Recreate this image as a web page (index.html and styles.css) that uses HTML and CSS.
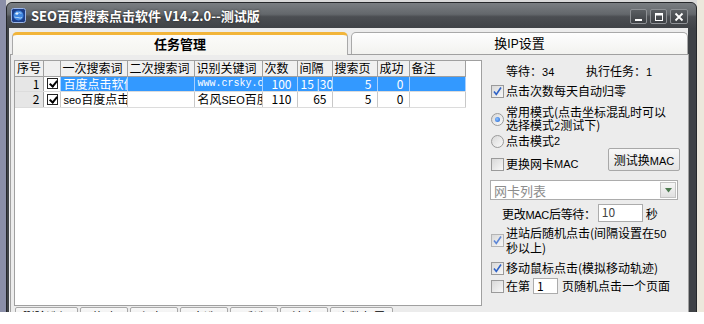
FILE: index.html
```html
<!DOCTYPE html>
<html lang="zh-CN">
<head>
    <meta charset="UTF-8">
    <title>SEO百度搜索点击软件 V14.2.0--测试版</title>
    <link rel="stylesheet" href="styles.css">
</head>
<body>
<div class="screen">
    <div class="window">

        <!-- Title bar -->
        <div class="titlebar">
            <svg class="app-icon" width="15" height="15" viewBox="0 0 15 15">
                <rect x="0.5" y="0.5" width="14" height="14" rx="2" fill="#1d3f8a" stroke="#9bb6e8"/>
                <circle cx="7.5" cy="7.5" r="5" fill="#3f86e0"/>
                <path d="M4 6c1.5-1 2.5 0 3.5-1s2 .5 3 .2M3.5 9c1.5.8 3 .2 4.5.8s2 .2 3-.5" stroke="#bfe0ff" stroke-width="1" fill="none"/>
                <circle cx="6" cy="5.5" r="1.2" fill="#e6f3ff"/>
            </svg>
            <span class="title">SEO百度搜索点击软件 V14.2.0--测试版</span>
            <div class="caption-btns">
                <span class="cap-btn"><svg width="10" height="10" viewBox="0 0 10 10"><rect x="1" y="7" width="7" height="2" fill="#fff"/></svg></span>
                <span class="cap-btn"><svg width="10" height="10" viewBox="0 0 10 10"><rect x="1.5" y="1.5" width="7" height="7" fill="none" stroke="#fff" stroke-width="1"/><rect x="1.5" y="1.5" width="7" height="2" fill="#fff"/></svg></span>
                <span class="cap-btn close"><svg width="10" height="10" viewBox="0 0 10 10"><path d="M1.5 1.5l7 7M8.5 1.5l-7 7" stroke="#fff" stroke-width="1.8"/></svg></span>
            </div>
        </div>

        <div class="client">
            <!-- Tabs -->
            <div class="tabs">
                <div class="tab active">任务管理</div>
                <div class="tab">换<span class="latin">IP</span>设置</div>
            </div>

            <div class="panel">
                <!-- Task list -->
                <div class="task-side">
                    <div class="listview">
                        <table class="grid">
                            <colgroup>
                                <col style="width:28px"><col style="width:17px"><col style="width:67px"><col style="width:67px">
                                <col style="width:68px"><col style="width:35px"><col style="width:35px"><col style="width:45px">
                                <col style="width:32px"><col style="width:56px">
                            </colgroup>
                            <tr class="head">
                                <th>序号</th><th></th><th>一次搜索词</th><th>二次搜索词</th><th>识别关键词</th>
                                <th>次数</th><th>间隔</th><th>搜索页</th><th>成功</th><th>备注</th>
                            </tr>
                            <tr class="selected">
                                <td class="num">1</td>
                                <td class="box"><span class="tick"></span></td>
                                <td>百度点击软件</td>
                                <td></td>
                                <td class="mono">www.crsky.com</td>
                                <td class="right">100</td>
                                <td>15 |30</td>
                                <td class="right">5</td>
                                <td class="right">0</td>
                                <td></td>
                            </tr>
                            <tr>
                                <td class="num">2</td>
                                <td class="box"><span class="tick"></span></td>
                                <td><span class="latin">seo</span>百度点击</td>
                                <td></td>
                                <td>名风<span class="latin">SEO</span>百度</td>
                                <td class="right">110</td>
                                <td class="right">65</td>
                                <td class="right">5</td>
                                <td class="right">0</td>
                                <td></td>
                            </tr>
                        </table>
                    </div>
                    <div class="btn-row">
                        <span class="btn wide">删除选择</span>
                        <span class="btn">修改</span>
                        <span class="btn">添加</span>
                        <span class="btn">全选</span>
                        <span class="btn">反选</span>
                        <span class="btn">清空</span>
                        <span class="btn wide">次数归零</span>
                    </div>
                </div>

                <!-- Options -->
                <div class="options">
                    <div class="stats">
                        <span class="stat-wait">等待：<span class="latin">34</span></span>
                        <span>执行任务：<span class="latin">1</span></span>
                    </div>

                    <label class="opt opt-reset"><span class="chk on"><svg width="11" height="11" viewBox="0 0 11 11"><path d="M2 5.5l2.3 3L9 1.5" stroke="#2f62c6" stroke-width="1.6" fill="none"/></svg></span>点击次数每天自动归零</label>

                    <label class="opt opt-mode1"><span class="radio on"></span><span class="two-line">常用模式(点击坐标混乱时可以<br>选择模式<span class="latin">2</span>测试下)</span></label>

                    <label class="opt opt-mode2"><span class="radio"></span>点击模式<span class="latin">2</span></label>

                    <div class="mac-row">
                        <label class="opt opt-mac"><span class="chk"></span>更换网卡<span class="latin">MAC</span></label>
                        <span class="btn test-btn">测试换<span class="latin">MAC</span></span>
                    </div>

                    <div class="combo">
                        <span>网卡列表</span>
                        <span class="combo-arrow"><svg width="7" height="5" viewBox="0 0 7 5"><path d="M0 0h7L3.5 4.5z" fill="#4d7a50"/></svg></span>
                    </div>

                    <div class="wait-row">
                        <span class="wait-label">更改<span class="latin">MAC</span>后等待：</span>
                        <span class="field wait-field">10</span>
                        <span>秒</span>
                    </div>

                    <label class="opt opt-random"><span class="chk on dim"><svg width="11" height="11" viewBox="0 0 11 11"><path d="M2 5.5l2.3 3L9 1.5" stroke="#5d86d6" stroke-width="1.6" fill="none"/></svg></span><span class="two-line">进站后随机点击(间隔设置在<span class="latin">50</span><br>秒以上)</span></label>

                    <label class="opt opt-mouse"><span class="chk on"><svg width="11" height="11" viewBox="0 0 11 11"><path d="M2 5.5l2.3 3L9 1.5" stroke="#2f62c6" stroke-width="1.6" fill="none"/></svg></span>移动鼠标点击(模拟移动轨迹)</label>

                    <label class="opt opt-page"><span class="chk"></span>在第<span class="field page-field">1</span>页随机点击一个页面</label>
                </div>
            </div>
        </div>
    </div>
</div>
</body>
</html>
```

FILE: styles.css
```css
/* Reset */
* {
    margin: 0;
    padding: 0;
    box-sizing: border-box;
}
body {
    background-color: #fff;
    font-family: "Noto Sans CJK SC", "DejaVu Sans", sans-serif;
    font-size: 12px;
    color: #000;
}
.latin {
    font-family: "Liberation Sans", sans-serif;
    font-size: 11px;
}

/* Desktop strip behind the window */
.screen {
    width: 704px;
    height: 312px;
    overflow: hidden;
    padding: 2px 7px 0 6px;
    background: linear-gradient(90deg, #8b8fa8 0, #8b8fa8 6px, #d8d8d8 6px, #d8d8d8 697px, #ece8dc 697px);
}

/* Window frame */
.window {
    height: 330px;
    background-color: #3f4246;
    border: 1px solid #26282b;
    border-radius: 6px 6px 0 0;
    padding: 0 8px 0 2px;
}
.titlebar {
    height: 25px;
    display: flex;
    align-items: center;
    margin: 0 -8px 0 -2px;
    padding: 0 8px 0 3px;
    border-radius: 5px 5px 0 0;
    background: linear-gradient(#7a7e82, #63676b 45%, #4b4e52 55%, #404347);
}
.app-icon {
    margin-left: 1px;
    flex-shrink: 0;
}
.title {
    margin-left: 5px;
    color: #fff;
    font-weight: bold;
    font-size: 13px;
    text-shadow: 0 0 2px #222;
}
.caption-btns {
    margin-left: auto;
    display: flex;
    gap: 3px;
    margin-top: 2px;
}
.cap-btn {
    width: 17px;
    height: 15px;
    display: flex;
    align-items: center;
    justify-content: center;
    border: 1px solid #8e9195;
    border-radius: 2px;
    background: linear-gradient(#5b5f63, #3d4044);
}
.cap-btn.close {
    width: 18px;
}

/* Client area */
.client {
    height: 300px;
    background-color: #ececec;
    padding: 3px 0 0 1px;
}

/* Tabs */
.tabs {
    display: flex;
    gap: 3px;
    padding-left: 2px;
    height: 23px;
    align-items: flex-end;
}
.tab {
    width: 336px;
    height: 22px;
    text-align: center;
    line-height: 20px;
    font-size: 13px;
    border: 1px solid #a9a9a9;
    border-bottom: none;
    border-radius: 5px 5px 0 0;
    background: linear-gradient(#fefefe, #f2f2ef);
}
.tab .latin {
    font-size: 12px;
}
.tab.active {
    height: 23px;
    font-weight: bold;
    border-top: 3px solid #f2b53a;
    line-height: 18px;
    margin-bottom: -1px;
    position: relative;
    z-index: 1;
    background: linear-gradient(#fbfbf9, #f4f4f0);
}
.tab:last-child {
    width: 337px;
}

.panel {
    display: flex;
    height: 260px;
    border: 1px solid #a0a0a0;
    border-bottom: none;
    background-color: #ececec;
    margin-right: -1px;
}

/* Task list */
.task-side {
    padding: 5px 0 0 3px;
}
.listview {
    width: 468px;
    height: 246px;
    background-color: #fff;
    border: 1px solid #a0a0a0;
    overflow: hidden;
}
.grid {
    table-layout: fixed;
    border-collapse: collapse;
    width: 450px;
}
.grid th,
.grid td {
    height: 15px;
    line-height: 14px;
    padding: 0 3px;
    white-space: nowrap;
    overflow: hidden;
    font-weight: normal;
    text-align: left;
    border-right: 1px solid #c8c8c8;
    border-bottom: 1px solid #dcdcdc;
}
.grid .head th {
    background-color: #f0f0f0;
    border-right: 1px solid #a0a0a0;
    border-bottom: 1px solid #a0a0a0;
    font-size: 12px;
    padding: 0 2px;
}
.grid td.num {
    background-color: #e6e6e6;
    text-align: right;
    border-right: 1px solid #a0a0a0;
}
.grid td.box {
    background-color: #fff;
    padding: 0 2px;
}
.grid .right {
    text-align: right;
    padding-right: 5px;
}
.grid .mono {
    font-family: "Liberation Mono", monospace;
    font-size: 10px;
}
.grid tr.selected td {
    background-color: #3399ff;
    color: #fff;
    border-right-color: #a8d0ff;
}
.grid tr.selected td.num {
    background-color: #e6e6e6;
    color: #000;
    border-right-color: #a0a0a0;
}
.grid tr.selected td.box {
    background-color: #fff;
}
.tick {
    display: block;
    width: 11px;
    height: 11px;
    margin-left: 1px;
    border: 1px solid #222;
    background-color: #fff;
    position: relative;
}
.tick::after {
    content: '';
    position: absolute;
    left: 3px;
    top: 0;
    width: 3px;
    height: 6px;
    border: solid #000;
    border-width: 0 2px 2px 0;
    transform: rotate(40deg);
}

.btn-row {
    display: flex;
    gap: 2px;
    margin: 1px 0 0 1px;
}
.btn {
    display: block;
    width: 48px;
    height: 20px;
    text-align: center;
    line-height: 18px;
    background: linear-gradient(#f8f8f8, #e4e4e4);
    border: 1px solid #a8a8a8;
    border-radius: 2px;
}
.btn.wide {
    width: 63px;
}

/* Options column */
.options {
    flex-grow: 1;
    padding: 8px 8px 0 8px;
    display: flex;
    flex-direction: column;
    white-space: nowrap;
}
.stats {
    padding-left: 16px;
    height: 16px;
    line-height: 16px;
    display: flex;
}
.stat-wait {
    width: 80px;
}
.opt {
    display: flex;
    align-items: center;
    line-height: 16px;
}
.two-line {
    line-height: 13px;
}
.chk {
    width: 13px;
    height: 13px;
    margin: 0 2px 0 1px;
    flex-shrink: 0;
    display: flex;
    align-items: center;
    justify-content: center;
    border: 1px solid #9a9a9a;
    background: linear-gradient(135deg, #d8d8d8, #f8f8f8);
}
.chk.dim {
    border-color: #b4b4b4;
}
.radio {
    width: 13px;
    height: 13px;
    margin: 0 2px 0 1px;
    flex-shrink: 0;
    border-radius: 50%;
    border: 1px solid #9a9a9a;
    background: linear-gradient(135deg, #d8d8d8, #fafafa);
    position: relative;
}
.radio.on::after {
    content: '';
    position: absolute;
    left: 3px;
    top: 3px;
    width: 5px;
    height: 5px;
    border-radius: 50%;
    background: radial-gradient(circle at 40% 40%, #8fc3ff, #1a5fd0);
}
.opt-reset {
    margin-top: 4px;
}
.opt-mode1 {
    margin-top: 7px;
    height: 26px;
}
.opt-mode2 {
    margin-top: 2px;
    height: 14px;
}
.mac-row {
    display: flex;
    align-items: flex-start;
    height: 24px;
}
.opt-mac {
    margin-top: 8px;
}
.test-btn {
    margin-left: auto;
    width: 72px;
    height: 23px;
    line-height: 21px;
    font-size: 12px;
}
.combo {
    margin-top: 8px;
    width: 188px;
    height: 20px;
    display: flex;
    align-items: center;
    justify-content: space-between;
    padding: 0 1px 0 3px;
    border: 1px solid #acacac;
    background-color: #fff;
    color: #8c8c8c;
    font-size: 13px;
}
.combo-arrow {
    width: 16px;
    height: 16px;
    display: flex;
    align-items: center;
    justify-content: center;
    border: 1px solid #c4c4c4;
    background: linear-gradient(#f6f6f6, #e0e0e0);
}
.wait-row {
    margin-top: 4px;
    height: 18px;
    display: flex;
    align-items: center;
    padding-left: 12px;
}
.wait-label {
    letter-spacing: -0.3px;
    margin-right: 2px;
}
.field {
    display: block;
    background-color: #fff;
    border: 1px solid #acacac;
    padding-left: 3px;
    line-height: 14px;
}
.wait-field {
    width: 45px;
    height: 18px;
    margin-right: 3px;
    color: #444;
}
.opt-random {
    margin-top: 4px;
    height: 28px;
}
.opt-mouse {
    margin-top: 6px;
}
.opt-page {
    margin-top: 2px;
}
.page-field {
    width: 25px;
    height: 16px;
    margin: 0 4px 0 3px;
}
```
